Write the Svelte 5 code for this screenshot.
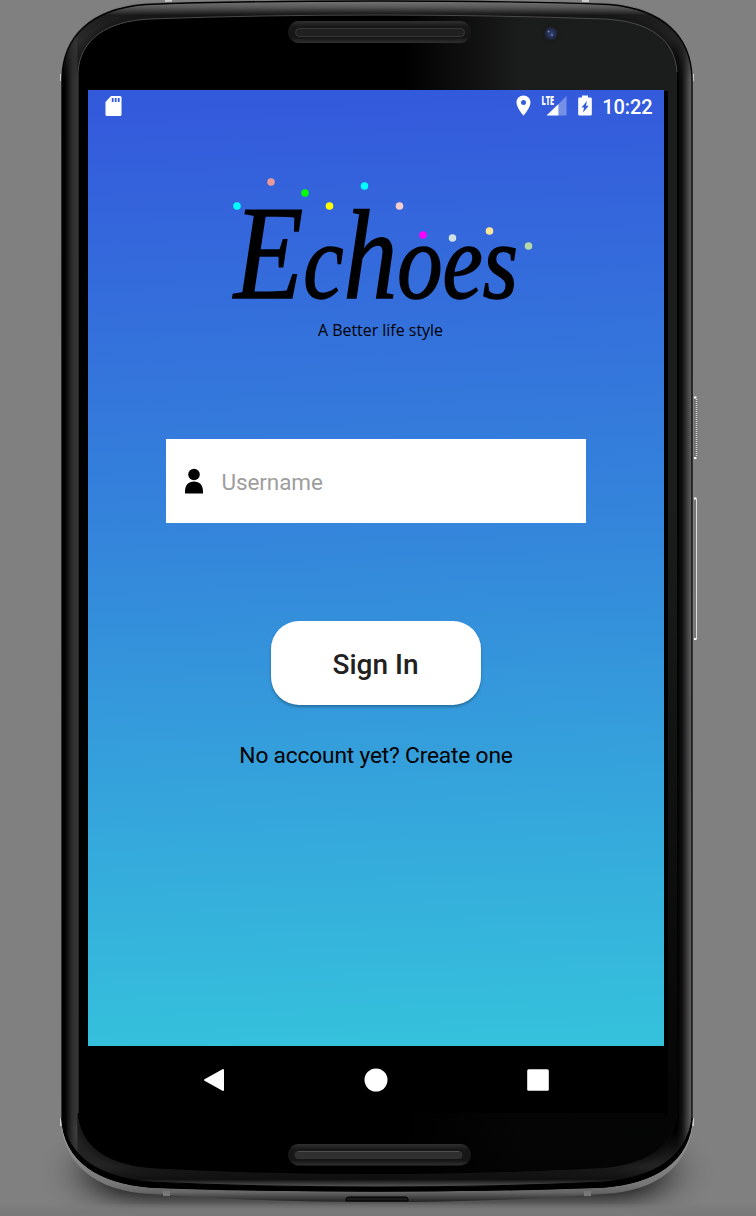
<script lang="ts">
  const dots = [
    [237, 206, '#00ffff'], [271, 182, '#ea9999'], [305, 193, '#00ff00'],
    [329.5, 206, '#ffff00'], [364.5, 186, '#00ffff'], [399.5, 206, '#f4cccc'],
    [423, 235, '#ff00ff'], [452.5, 238, '#d0e0e3'], [489.5, 231, '#ffe599'],
    [528.5, 246, '#b6d7a8']
  ];
  const body = 'M62 78 C63 36 91 9 145 4.5 Q235 1 377 1 Q519 1 609 4.5 C663 9 691 36 692 78 V1118 C690 1162 654 1183 604 1187 Q500 1191 377 1191 Q254 1191 150 1187 C100 1183 64 1162 62 1118 Z';
  const shell = 'M61 78 C62 34 91 7 145 2.5 Q235 0 377 0 Q519 0 609 2.5 C663 7 692 34 693 78 V1120 C691 1163 660 1191 604 1194 Q500 1202 377 1202 Q254 1202 150 1194 C94 1191 63 1163 61 1120 Z';
  const face = 'M78 72 C80 40 106 21 150 19 Q260 15 377 15 Q494 15 604 19 C650 21 675 40 677 72 V1113 C675 1144 650 1164 604 1168 Q500 1174 377 1174 Q254 1174 150 1168 C104 1164 80 1144 78 1113 Z';
</script>

<main class="stage">
  <svg class="device" width="756" height="1216" viewBox="0 0 756 1216" aria-hidden="true">
    <defs>
      <linearGradient id="rail" x1="0" y1="0" x2="0" y2="1">
        <stop offset="0" stop-color="#777" /><stop offset=".94" stop-color="#999" />
        <stop offset=".985" stop-color="#777" /><stop offset=".992" stop-color="#666" /><stop offset="1" stop-color="#222" />
      </linearGradient>
      <linearGradient id="rim" x1="62" y1="0" x2="692" y2="0" gradientUnits="userSpaceOnUse">
        <stop offset="0" stop-color="#000" /><stop offset=".006" stop-color="#050505" />
        <stop offset=".017" stop-color="#333" /><stop offset=".024" stop-color="#484848" />
        <stop offset=".025" stop-color="#222" /><stop offset=".976" stop-color="#000" />
        <stop offset=".985" stop-color="#161616" /><stop offset="1" stop-color="#666" />
      </linearGradient>
      <linearGradient id="toprim" x1="0" y1="0" x2="0" y2="80" gradientUnits="userSpaceOnUse">
        <stop offset="0" stop-color="#7a7a7a" /><stop offset=".09" stop-color="#585858" />
        <stop offset=".19" stop-color="#1c1c1c" /><stop offset=".5" stop-color="#2c2c2c" stop-opacity=".8" />
        <stop offset="1" stop-color="#222" stop-opacity="0" />
      </linearGradient>
      <linearGradient id="footrim" x1="0" y1="1130" x2="0" y2="1190" gradientUnits="userSpaceOnUse">
        <stop offset="0" stop-color="#222" stop-opacity="0" /><stop offset=".6" stop-color="#242424" />
        <stop offset=".82" stop-color="#101010" /><stop offset=".95" stop-color="#5a5a5a" /><stop offset="1" stop-color="#666" />
      </linearGradient>
      <linearGradient id="glass" x1="78" y1="0" x2="677" y2="0" gradientUnits="userSpaceOnUse">
        <stop offset="0" stop-color="#000" /><stop offset=".54" stop-color="#000" />
        <stop offset=".74" stop-color="#1b1c1c" /><stop offset="1" stop-color="#1a1d1b" />
      </linearGradient>
      <linearGradient id="fade" x1="0" y1="500" x2="0" y2="1170" gradientUnits="userSpaceOnUse">
        <stop offset="0" stop-color="#000" stop-opacity="0" /><stop offset=".8" stop-color="#000" stop-opacity=".75" />
        <stop offset="1" stop-color="#000" stop-opacity=".86" />
      </linearGradient>
      <linearGradient id="slot" x1="0" y1="0" x2="0" y2="1">
        <stop offset="0" stop-color="#303030" /><stop offset=".25" stop-color="#181818" />
        <stop offset=".75" stop-color="#151515" /><stop offset="1" stop-color="#303030" />
      </linearGradient>
      <radialGradient id="lens"><stop offset="0" stop-color="#344268" /><stop offset=".6" stop-color="#222d50" /><stop offset="1" stop-color="#1b1c22" /></radialGradient>
      <filter id="soft" x="-20%" y="-200%" width="140%" height="500%"><feGaussianBlur stdDeviation="24 11" /></filter>
      <filter id="fine"><feGaussianBlur stdDeviation="3" /></filter>
      <clipPath id="bodyclip"><path d={body} /></clipPath>
    </defs>
    <rect width="756" height="1216" fill="#808080" />
    <rect x="92" y="1145" width="570" height="54" rx="27" fill="#000" opacity=".85" filter="url(#soft)" />
    <rect x="-20" y="1207" width="796" height="30" fill="#797979" filter="url(#fine)" />
    <g fill="#ccc">
      <rect x="165" y="0" width="7" height="4" /><rect x="582" y="0" width="7" height="4" />
      <rect x="60" y="74" width="3" height="7" /><rect x="692" y="74" width="2" height="7" />
      <rect x="60" y="1118" width="3" height="8" /><rect x="691" y="1118" width="3" height="8" />
    </g>
    <path d={shell} fill="url(#rail)" />
    <path d={body} fill="url(#rim)" />
    <g clip-path="url(#bodyclip)">
      <path d={body} fill="url(#toprim)" />
      <path d={body} fill="url(#footrim)" />
      <path d={face} fill="none" stroke="#000" stroke-width="6" filter="url(#fine)" opacity=".4" />
    </g>
    <path d={body} fill="none" stroke="#000" stroke-width="1.300" />
    <path d="M62 1118 C64 1162 100 1183 150 1187 Q254 1191 377 1191 Q500 1191 604 1187 C654 1183 690 1162 692 1118 C687 1157 654 1178 604 1182 Q500 1187 377 1187 Q254 1187 150 1182 C100 1178 67 1157 62 1118Z" fill="#000" stroke="#000" />
    <path d={face} fill="url(#glass)" />
    <path d={face} fill="url(#fade)" />
    <path d="M78 1113 V72 C80 40 106 21 150 19 Q260 15 377 15 Q494 15 604 19 C650 21 675 40 677 72" fill="none" stroke="#4a4a4a" stroke-width="1" />
    <rect x="664" y="91" width="4" height="1025" fill="#000" />
    <rect x="288" y="21" width="183" height="22" rx="11" fill="url(#slot)" />
    <rect x="295.5" y="28.500" width="169" height="8" rx="4" fill="#202020" stroke="#383838" />
    <rect x="288" y="1144" width="183" height="21.500" rx="10.700" fill="url(#slot)" />
    <rect x="294.500" y="1151" width="168" height="8" rx="4" fill="#303030" />
    <path d="M298 1151.500h161" stroke="#505050" />
    <circle cx="551" cy="33.500" r="10" fill="#1b1a1a" /><circle cx="551" cy="33.500" r="7" fill="url(#lens)" />
    <circle cx="548.500" cy="31.500" r="1" fill="#7182b0" /><circle cx="552" cy="35" r="1.300" fill="#54699d" />
    <path d="M346 1201v-2q0-2 3-2h56q3 0 3 2v2z" fill="#1a1a1a" stroke="#000" />
    <rect x="163" y="1191" width="7" height="5" fill="#777" /><rect x="584" y="1191" width="7" height="5" fill="#777" />
    <rect x="694" y="397" width="3.500" height="62" rx="1" fill="#707070" />
    <path d="M696.500 399v58" stroke="#ddd" stroke-width="1.500" stroke-dasharray="1 1" />
    <rect x="694" y="498" width="3" height="142" rx="1" fill="#777" />
    <path d="M696.500 499v140" stroke="#ddd" />
    <path d="M694 397.500h2.500M694 458h2.500M694 498.500h2.500M694 639h2.500" stroke="#fff" stroke-width="2" />
  </svg>

  <div class="display">
    <section class="screen">
      <header class="status">
        <svg width="17" height="22" viewBox="0 0 17 22"><path d="M6 1h9q1.500 0 1.500 1.500v17q0 1.500-1.500 1.500H2q-1.500 0-1.500-1.500V7z" fill="#fff" /><path d="M7.700 3v4M10.700 3v4M13.700 3v4" stroke="#345bdc" stroke-width="1.800" /></svg>
        <span class="space"></span>
        <svg class="pin" width="15" height="21" viewBox="0 0 15 21"><path fill="#fff" fill-rule="evenodd" d="M7.500.5C3.500.5.500 3.500.500 7.500c0 5.200 7 13.200 7 13.200s7-8 7-13.200c0-4-3-7-7-7zM7.500 5a2.500 2.500 0 1 1 0 5 2.500 2.500 0 0 1 0-5z" /></svg>
        <svg class="signal" width="26" height="21" viewBox="0 0 26 21"><path d="M25.500 1v19.500h-8V9z" fill="#fff" opacity=".32" /><path d="M17.500 9v11.500H5.500z" fill="#fff" /><text x="0.500" y="9.500" textLength="12.500" lengthAdjust="spacingAndGlyphs">LTE</text></svg>
        <svg class="battery" width="14" height="21" viewBox="0 0 14 21"><path fill="#fff" fill-rule="evenodd" d="M4 .5h6v2h2.500q1.300 0 1.300 1.300v15.500q0 1.300-1.300 1.300h-11Q.200 20.600.200 19.300V3.800Q.200 2.500 1.500 2.500H4zM9 6l-5.500 6.500H6L5 17.500l5.800-6.800H8z" /></svg>
        <time>10:22</time>
      </header>

      <svg class="brand" width="320" height="180" viewBox="220 170 320 180">
        {#each dots as [x, y, color]}
          <circle cx={x} cy={y} r="3.800" fill={color} />
        {/each}
        <text class="wordmark" x="234" y="298" textLength="284" lengthAdjust="spacingAndGlyphs"><tspan class="cap">E</tspan>c<tspan class="tall">h</tspan>oes</text>
        <text class="tagline" x="318" y="335.500" textLength="125" lengthAdjust="spacingAndGlyphs">A Better life style</text>
      </svg>

      <div class="field">
        <svg width="20" height="26" viewBox="0 0 20 26"><circle cx="10" cy="6.500" r="5.800" /><path d="M1 25.500v-2C1 17 4.500 13.500 10 13.500S19 17 19 23.500v2z" /></svg>
        <span>Username</span>
      </div>
      <button>Sign In</button>
      <p>No account yet? Create one</p>
    </section>
    <nav>
      <svg width="24" height="24" viewBox="0 0 24 24"><path d="M3 12 21 2v20z" fill="#fff" stroke="#fff" stroke-width="2" stroke-linejoin="round" /></svg>
      <svg width="24" height="24" viewBox="0 0 24 24"><circle cx="12" cy="12" r="11.500" fill="#fff" /></svg>
      <svg width="24" height="24" viewBox="0 0 24 24"><rect x="1.200" y="1.200" width="21.600" height="21.600" rx="1.500" fill="#fff" /></svg>
    </nav>
  </div>
</main>

<style>
  :global(body) { margin: 0; background: #808080; }
  .stage { display: grid; width: 756px; height: 1216px; overflow: hidden; font-family: Roboto, sans-serif; }
  .device, .display { grid-area: 1 / 1; }
  svg { display: block; flex: none; }
  .display { z-index: 1; width: 576px; margin: 90px 0 0 88px; }
  .screen { box-sizing: border-box; height: 956px; display: flex; flex-direction: column; align-items: center; background: linear-gradient(178deg, #345adc 2%, #3485db 46%, #35c1dc 99%); }
  .status { box-sizing: border-box; width: 100%; height: 42px; padding: 5px 11.500px 0 16.500px; display: flex; align-items: flex-start; color: #fff; }
  .space { flex: 1; }
  .pin { margin-right: 10px; }
  .signal { margin-right: 11px; overflow: visible; }
  .signal text { font: 800 12px "Open Sans", sans-serif; fill: #fff; }
  .battery { margin-right: 10px; }
  time { padding-top: 1px; font-size: 20px; line-height: 23px; font-weight: 500; letter-spacing: -.1px; }
  .brand { margin: 38px 0 89px 8px; }
  .wordmark { font: italic 107px "Liberation Serif", serif; stroke: #000; stroke-width: 1.500px; }
  .cap { font-size: 134px; }
  .tall { font-size: 127px; }
  .tagline { font: 500 15.500px "Open Sans", sans-serif; }
  .field { box-sizing: border-box; width: 420px; height: 84px; margin-right: 1px; padding: 0 18.500px; display: flex; align-items: center; background: #fff; }
  .field span { margin-left: 17.500px; padding-top: 2px; color: #9e9e9e; font-size: 22.500px; line-height: 30px; letter-spacing: -.1px; }
  button { width: 210px; height: 84px; margin: 98px 1px 0 0; padding: 3px 0 0; border: 0; border-radius: 28px; background: #fff; box-shadow: 0 2px 3px rgba(0,0,0,.28); color: #212121; font: 500 28px Roboto, sans-serif; }
  p { margin: 36px 0 0; color: #000; font-size: 22.750px; line-height: 30px; letter-spacing: -.19px; white-space: nowrap; }
  nav { height: 67px; padding: 0 114px 0 114px; display: flex; align-items: center; justify-content: space-between; background: #000; }
</style>
